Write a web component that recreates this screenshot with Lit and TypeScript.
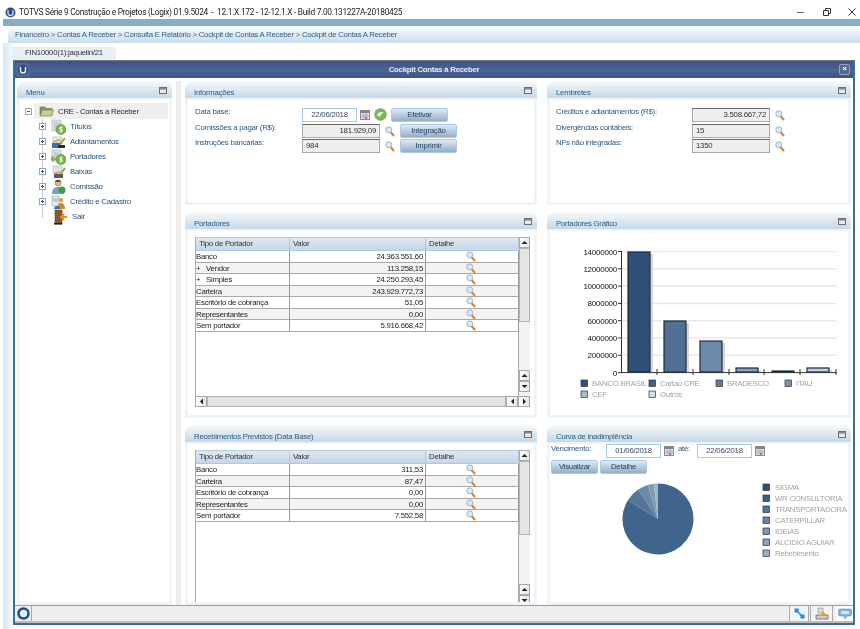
import { LitElement, html, css, svg } from "lit";
import { customElement } from "lit/decorators.js";

const mag = html`<svg class="mag" width="10" height="11" viewBox="0 0 10 11"><line x1="5.5" y1="6" x2="9" y2="10" stroke="#d9822b" stroke-width="2"/><circle cx="3.8" cy="3.8" r="3" fill="#dbe9f2" stroke="#9fb4c2" stroke-width="1"/></svg>`;
const cal = html`<svg class="cal" width="10" height="10" viewBox="0 0 10 10"><rect x="0.5" y="0.5" width="9" height="9" fill="#f4f4f4" stroke="#8a8a8a"/><rect x="1" y="1" width="8" height="2" fill="#7d8794"/><path d="M1 5h8M1 7h8M3 3v6M5 3v6M7 3v6" stroke="#9a9a9a" stroke-width=".7"/><rect x="5.2" y="7.2" width="1.6" height="1.6" fill="#d23b3b"/></svg>`;
const coin = svg`<circle cx="10" cy="10.500" r="5" fill="#7ab648" stroke="#4f8a2a" stroke-width=".6"/><path d="M11.6 8.800c-1-.9-3-.6-3 .6s3 .7 3 2-2.200 1.500-3.200.6M10 7.300v6.400" fill="none" stroke="#fff" stroke-width=".9"/>`;
const doc = svg`<rect x="1" y="1" width="9" height="11" fill="#d9dee5" stroke="#aab3bd" stroke-width=".6"/><path d="M3 4h5M3 6h5M3 8h4" stroke="#a0a9b3" stroke-width=".6"/>`;
const check = svg`<path d="M5 9l3 3 6-8" fill="none" stroke="#79b13a" stroke-width="2"/>`;
const hands = svg`<rect x="1" y="9" width="8" height="5" fill="#3f6fb0"/><rect x="7" y="11" width="7" height="3" fill="#2c2c2c"/><path d="M2 8l5-2 5 1" fill="none" stroke="#e0a979" stroke-width="2"/>`;
const icons: Record<string, unknown> = {
  titulos: svg`${doc}${coin}`,
  adiant: svg`<rect x="2" y="3" width="9" height="6" fill="#e8edf2" stroke="#aab3bd" stroke-width=".6"/>${check}${hands}`,
  portad: svg`${doc}<path d="M0 10h5M2.500 7.500L0 10l2.500 2.500" fill="none" stroke="#79b13a" stroke-width="1.500"/>${coin}`,
  baixas: svg`<rect x="2" y="2" width="9" height="7" fill="#dfe4ea" stroke="#aab3bd" stroke-width=".6"/>${check}<rect x="3" y="10" width="9" height="4" fill="#5a5a5a"/><path d="M3 9l6-1" stroke="#e0a979" stroke-width="2"/>`,
  comissao: svg`<circle cx="7" cy="4" r="3" fill="#e3b98b" stroke="#8a5f34" stroke-width=".5"/><path d="M4 3c1-3 5-3 6 0" fill="#6b4a26"/><path d="M1 15c0-6 3-7 6-7s6 1 6 7z" fill="#7e9fc4"/>${svg`<circle cx="11" cy="11" r="3.500" fill="#3f9c4a"/>`}`,
  credito: svg`<rect x="1" y="2" width="7" height="10" fill="#e6e9ee" stroke="#9aa3ad" stroke-width=".6"/><path d="M2 5h5M2 7h5" stroke="#79a04a" stroke-width=".7"/><circle cx="10" cy="6" r="2.200" fill="#d9a441"/><path d="M6 15c0-4 2-6 4-6s4 2 4 6z" fill="#c98a2b"/><path d="M3 15c0-2 1-3 3-3s3 1 3 3z" fill="#3f6fb0"/>`,
  sair: svg`<rect x="3" y="1" width="7" height="14" fill="#8a5a2b" stroke="#5a3a1a" stroke-width=".5"/><rect x="2" y="14" width="8" height="1.500" fill="#222"/><path d="M15 8H10M12 5L9 8l3 3" fill="none" stroke="#ef8a1d" stroke-width="2"/>`,
};
const treeIcon = (k: string) => html`<svg class="ticon" width="15" height="16" viewBox="0 0 15 16">${icons[k]}</svg>`;
const minIcon = html`<svg class="min" width="8" height="7" viewBox="0 0 8 7"><rect x=".5" y=".5" width="7" height="6" fill="#e9e9e9" stroke="#6f6f6f"/><rect x="1" y="1" width="6" height="1.600" fill="#8a8a8a"/></svg>`;

const barColors = ["#2f5178", "#4f6f95", "#6c88aa", "#8aa2c0", "#4a5a70", "#c3d0e4"];
const barTops = [253, 322, 342, 369, 372, 369];
const barX = [628, 664, 700, 736, 772, 807];
const yLabels = ["14000000", "12000000", "10000000", "8000000", "6000000", "4000000", "2000000", "0"];
const legend1 = [["BANCO BRASIL", "#2f5178", 581, 384], ["Cartao CRE", "#3d6189", 649, 384], ["BRADESCO", "#5d7ba0", 716, 384], ["ITAU", "#7a94b5", 785, 384], ["CEF", "#a8bbd4", 581, 395], ["Outros", "#d3dcea", 649, 395]] as const;
const legend2 = [["SIGMA", "#2f5178"], ["WR CONSULTORIA", "#3d5f86"], ["TRANSPORTADORA", "#54739a"], ["CATERPILLAR", "#6a84a6"], ["IDEIAS", "#7d96b8"], ["ALCIDIO AGUIAR", "#8aa0bd"], ["Rebebimento", "#9db0ca"]];

function pie(cx: number, cy: number, r: number) {
  const stops = [[0, 302, "#41648c"], [302, 326, "#557699"], [326, 343, "#6a88a9"], [343, 353, "#8099b7"], [353, 360, "#9fb3cb"]] as const;
  return stops.map(([a, b, c]) => {
    const p = (d: number) => { const t = (d * Math.PI) / 180; return `${(cx + r * Math.sin(t)).toFixed(2)} ${(cy - r * Math.cos(t)).toFixed(2)}`; };
    return svg`<path d="M${cx} ${cy}L${p(a)}A${r} ${r} 0 ${b - a > 180 ? 1 : 0} 1 ${p(b)}Z" fill="${c}"/>`;
  });
}

const t1 = [["Banco", "24.363.551,60"], ["+   Vendor", "113.258,15"], ["+   Simples", "24.250.293,45"], ["Carteira", "243.929.772,73"], ["Escritório de cobrança", "51,05"], ["Representantes", "0,00"], ["Sem portador", "5.916.668,42"]];
const t2 = [["Banco", "311,53"], ["Carteira", "87,47"], ["Escritório de cobrança", "0,00"], ["Representantes", "0,00"], ["Sem portador", "7.552,58"]];
const tree = [["titulos", "Títulos"], ["adiant", "Adiantamentos"], ["portad", "Portadores"], ["baixas", "Baixas"], ["comissao", "Comissão"], ["credito", "Crédito e Cadastro"]];

const up = html`<svg width="7" height="5" viewBox="0 0 7 5"><path d="M3.500 1L6.500 4H.5z" fill="#222"/></svg>`;
const down = html`<svg width="7" height="5" viewBox="0 0 7 5"><path d="M3.500 4L6.500 1H.5z" fill="#222"/></svg>`;
const left = html`<svg width="5" height="7" viewBox="0 0 5 7"><path d="M1 3.500L4 .5v6z" fill="#222"/></svg>`;
const right = html`<svg width="5" height="7" viewBox="0 0 5 7"><path d="M4 3.500L1 .5v6z" fill="#222"/></svg>`;

@customElement("app-root")
export class AppRoot extends LitElement {
  static styles = css`
    :host { display: block; width: 860px; height: 629px; overflow: hidden; background: #fff; font-family: "Liberation Sans", Arial, sans-serif; font-size: 7.800px; letter-spacing: -0.25px; color: #2a2a2a; filter: blur(0.3px); }
    .titlebar { height: 19px; display: flex; align-items: center; padding: 5px 0 0 5px; box-sizing: border-box; font: 8.300px Roboto, sans-serif; letter-spacing: -0.28px; color: #222; white-space: pre; gap: 3px; }
    .logo { flex: none; }
    .wctl { margin-left: auto; display: flex; gap: 17.500px; padding-right: 4px; align-items: center; }
    .shell { display: flex; flex-direction: column; margin-left: 3px; height: 610px; }
    .band { height: 7px; flex: none; background: #86aec4; }
    .crumb { height: 17px; flex: none; box-sizing: border-box; margin-left: 5px; border-radius: 7px 7px 0 0; background: linear-gradient(#fafcfe, #c9dceb); padding: 4px 0 0 7px; color: #2c5f8c; white-space: nowrap; line-height: 10px; }
    .stage { flex: 1; display: flex; min-height: 0; }
    .strip { width: 10px; flex: none; background: linear-gradient(90deg, #d9e7f2, #f4f8fb); }
    .content { flex: 1; display: flex; flex-direction: column; min-width: 0; padding-right: 5px; }
    .tabs { height: 17px; flex: none; display: flex; align-items: flex-end; }
    .tab { width: 104px; margin-left: -1px; height: 13px; box-sizing: border-box; background: #e6eff6; border-radius: 3px 3px 0 0; text-align: center; line-height: 12px; color: #333; }
    .window { height: 565px; box-sizing: border-box; flex: none; border: 2px solid #3c6e9c; border-top: 1px solid #777; display: flex; flex-direction: column; overflow: hidden; background: #fff; }
    .wintitle { height: 17px; flex: none; background: linear-gradient(#3d5288, #4d6394 55%, #3e5488); display: flex; align-items: center; color: #e6ecf5; font-weight: bold; font-size: 7.800px; padding: 0 3px 0 1px; position: relative; }
    .wintitle .t { position: absolute; left: 0; right: 0; text-align: center; }
    .wlogo { flex: none; position: relative; }
    .wclose { margin-left: auto; width: 11px; height: 11px; box-sizing: border-box; background: #54688f; border: 1px solid #8fa2c4; border-radius: 2px; color: #fff; font-size: 8px; line-height: 8px; text-align: center; position: relative; }
    .wbody { flex: 1; min-height: 0; display: flex; padding: 3px 2px 0 2px; }
    .col-menu { width: 155px; flex: none; }
    .splitter { width: 5px; flex: none; margin: 0 4px; background: #ededed; }
    .grid { flex: 1; display: grid; grid-template-columns: 352px 304px; grid-template-rows: 124px 206px 180px; column-gap: 10px; row-gap: 7px; }
    .panel { display: flex; flex-direction: column; background: #eef4f9; border-radius: 8px 8px 0 0; min-height: 0; height: 100%; overflow: hidden; }
    .phead { height: 17px; flex: none; box-sizing: border-box; background: linear-gradient(#f7fafc, #c5d8e7); display: flex; justify-content: space-between; padding: 7px 5px 0 9px; color: #2b5f88; line-height: 9px; }
    .phead .min { margin-top: -1px; }
    .pbody { flex: 1; min-height: 0; margin: 2px 3px 3px; background: #fff; position: relative; overflow: hidden; }
    .form { padding: 8px 0 0 7px; display: grid; row-gap: 1.500px; }
    .frow { display: flex; align-items: flex-start; height: 14px; }
    .frow .lab { color: #2f5a7c; line-height: 8px; }
    .info .lab { width: 107px; flex: none; }
    .rem .lab { width: 136px; flex: none; }
    .rem.form { padding-left: 6px; }
    .date { width: 55px; height: 14px; box-sizing: border-box; border: 1px solid #a9cbe8; background: #fff; text-align: center; line-height: 12px; color: #3c4d5e; flex: none; }
    .ro { height: 14px; box-sizing: border-box; background: #efefef; border: 1px solid #a8a8a8; border-top: 1.500px solid #666; text-align: right; padding-right: 3px; line-height: 11px; color: #333; flex: none; width: 78px; }
    .ro.l { text-align: left; padding-left: 3px; }
    .btn { height: 14px; width: 57px; box-sizing: border-box; border: 1px solid #a9cbe8; background: linear-gradient(#dfe9f2, #94aec6); border-radius: 2px; text-align: center; line-height: 12px; color: #1f4467; flex: none; }
    .frow .mag { margin: 2px 0 0 5px; flex: none; }
    .frow .cal { margin: 2px 0 0 3px; flex: none; }
    .frow .gr { margin: 0 0 0 4px; flex: none; }
    .frow .btn.e { margin-left: 4px; }
    .frow .btn.i { margin-left: 5px; }
    .tree { padding: 3px 0 0 5px; position: relative; }
    .root { display: flex; align-items: center; height: 16px; }
    .exp { width: 7px; height: 7px; box-sizing: border-box; border: 1px solid #9aa7b3; background: #fff; position: relative; flex: none; }
    .exp::before { content: ""; position: absolute; left: 1px; right: 1px; top: 2px; height: 1px; background: #2f5a8c; }
    .exp.plus::after { content: ""; position: absolute; top: 1px; bottom: 1px; left: 2px; width: 1px; background: #2f5a8c; }
    .rootsel { flex: 1; height: 16px; background: #efefef; display: flex; align-items: center; gap: 4px; padding-left: 5px; color: #2a2a2a; margin-right: 1px; margin-left: 2px; }
    .kids { padding-left: 14px; position: relative; }
    .kids::before { content: ""; position: absolute; left: 17px; top: 0; bottom: 6px; width: 1px; background: #ccc; }
    .kid { display: flex; align-items: center; height: 15px; color: #2b5378; position: relative; }
    .kid .ticon { margin: 0 4px 0 5px; flex: none; }
    .kid .nox { width: 7px; flex: none; }
    .kid.s .ticon { margin: 0 5px 0 6px; }
    .tblwrap { display: flex; flex-direction: column; margin: 6px 0 0 7px; width: 335px; border: 0; }
    .tmain { display: flex; }
    .tbl { width: 324px; box-sizing: border-box; border: 1px solid #aaa; border-top: 0; border-bottom: 0; background: #fff; }
    .tgrid { display: grid; grid-template-columns: 94px 136px 93px; grid-auto-rows: 11.500px; }
    .th { height: 14px; box-sizing: border-box; background: linear-gradient(#dfe8f1, #c7d6e6); border-top: 1px solid #bcd; border-bottom: 1px solid #a9cbe8; border-right: 1px solid #a9cbe8; padding-left: 3px; line-height: 12px; color: #333; }
    .thr { display: grid; grid-template-columns: 94px 136px 93px; }
    .td { border-right: 1px solid #999; border-bottom: 1px solid #aaa; box-sizing: border-box; padding: 0 2px 0 0; line-height: 11.500px; color: #222; white-space: pre; overflow: hidden; }
    .td.r { text-align: right; }
    .td.c { display: flex; justify-content: center; align-items: flex-start; }
    .td.z { background: #f3f3f3; }
    .vs { width: 11px; flex: none; display: flex; flex-direction: column; background: #f2f2f2; }
    .sb { height: 11px; width: 11px; flex: none; box-sizing: border-box; border: 1px solid #aaa; background: linear-gradient(90deg, #fff, #e6e6e6); display: flex; align-items: center; justify-content: center; }
    .thumb { background: #e4e4e4; border: 1px solid #b4b4b4; box-sizing: border-box; flex: none; display: flex; align-items: center; justify-content: center; }
    .dots { background-image: radial-gradient(#aaa 30%, transparent 35%); background-size: 2px 2px; }
    .vs .thumb { width: 11px; }
    .vs .dots { width: 7px; height: 12px; }
    .vs .sp { flex: 1; }
    .hs { display: flex; height: 11px; width: 335px; box-sizing: border-box; }
    .hs .thumb { flex: 1; height: 11px; }
    .hs .dots { width: 13px; height: 7px; }
    .hs .sb { width: 12px; }
    .c1 { display: flex; align-items: flex-start; height: 15px; padding: 0 0 0 1px; }
    .c1 .lab { color: #2f5a7c; width: 55px; flex: none; line-height: 10px; }
    .c1 .cal { margin: 2px 0 0 3px; flex: none; }
    .c1 .ate { margin: 0 0 0 4px; width: 19px; flex: none; color: #2f5a7c; line-height: 10px; }
    .c2 { display: flex; gap: 2px; padding-left: 1px; margin-top: 1px; }
    .c2 .btn { width: 47px; }
    .statusbar { height: 15px; flex: none; display: flex; background: #eee; align-items: stretch; border-top: 1px solid #9c9c9c; border-bottom: 2px solid #bbb; position: relative; }
    .st-logo { width: 16px; flex: none; display: flex; align-items: center; justify-content: center; border-right: 1px solid #aaa; }
    .st-in { flex: 1; }
    .st-b { width: 18px; flex: none; border: 1px solid #aaa; border-width: 0 1px; display: flex; align-items: center; justify-content: center; background: #f3f3f3; margin-left: 1px; }
    .st-b.w { width: 21px; }
    .st-c { width: 17px; flex: none; display: flex; align-items: center; justify-content: center; background: #fff; margin-left: 3px; }
    svg text { font-family: "Liberation Sans", Arial, sans-serif; letter-spacing: -0.25px; }
  `;

  private table(rows: string[][]) {
    return html`<div class="thr"><div class="th">Tipo de Portador</div><div class="th">Valor</div><div class="th">Detalhe</div></div>
      <div class="tgrid">${rows.map((r, i) => {
        const z = i % 2 ? "z" : "";
        return html`<div class="td ${z}">${r[0]}</div><div class="td r ${z}">${r[1]}</div><div class="td c ${z}">${mag}</div>`;
      })}</div>`;
  }

  private panel(title: string, body: unknown) {
    return html`<section class="panel"><div class="phead"><span>${title}</span>${minIcon}</div><div class="pbody">${body}</div></section>`;
  }

  private tableBox(rows: string[][], h: number, hs: boolean) {
    return html`<div class="tblwrap">
      <div class="tmain" style="height:${h}px">
        <div class="tbl">${this.table(rows)}</div>
        <div class="vs"><div class="sb">${up}</div><div class="thumb" style="height:74px"><div class="dots"></div></div><div class="sp"></div><div class="sb">${up}</div><div class="sb">${down}</div><div style="height:4px"></div></div>
      </div>
      ${hs ? html`<div class="hs"><div class="sb">${left}</div><div class="thumb"><div class="dots"></div></div><div class="sb">${left}</div><div class="sb">${right}</div></div>` : ""}
    </div>`;
  }

  render() {
    const tlogo = html`<svg class="logo" width="11" height="11" viewBox="0 0 11 11"><circle cx="5.500" cy="5.500" r="5" fill="#2d4f86"/><path d="M3 3v3a2.500 2.500 0 005 0V3" fill="none" stroke="#cfe0ef" stroke-width="1.300"/></svg>`;
    return html`
      <div class="titlebar">${tlogo}<span>TOTVS Série 9 Construção e Projetos (Logix) 01.9.5024  -  12.1.X.172 - 12-12.1.X - Build 7.00.131227A-20180425</span>
        <div class="wctl">
          <svg width="8" height="8" viewBox="0 0 8 8"><path d="M0 4.500h7" stroke="#666" stroke-width="1"/></svg>
          <svg width="8" height="8" viewBox="0 0 8 8"><path d="M.5 2.500h5v5h-5zM2.500 2.500V.5h5v5h-2" fill="none" stroke="#333"/></svg>
          <svg width="8" height="8" viewBox="0 0 8 8"><path d="M.5.5l7 7M7.500.5l-7 7" stroke="#333"/></svg>
        </div>
      </div>
      <div class="shell">
        <div class="band"></div>
        <div class="crumb">Financeiro &gt; Contas A Receber &gt; Consulta E Relatório &gt; Cockpit de Contas A Receber &gt; Cockpit de Contas A Receber</div>
        <div class="stage">
          <div class="strip"></div>
          <div class="content">
            <div class="tabs"><div class="tab">FIN10000(1):jaquelin/21</div></div>
            <div class="window">
              <div class="wintitle">
                <span class="t">Cockpit Contas à Receber</span>
                <svg class="wlogo" width="14" height="14" viewBox="0 0 14 14"><rect width="14" height="14" rx="2" fill="#54688f"/><circle cx="7" cy="7" r="5" fill="#1f4b8a"/><path d="M4.500 4v3.500a2.500 2.500 0 005 0V4" fill="none" stroke="#e6f0fa" stroke-width="1.500"/></svg>
                <div class="wclose">×</div>
              </div>
              <div class="wbody">
                <div class="col-menu">
                  ${this.panel("Menu", html`<div class="tree">
                    <div class="root"><div class="exp"></div><div class="rootsel">
                      <svg width="15" height="12" viewBox="0 0 15 12"><path d="M1 2h5l1 1.500h6V10H1z" fill="#8c9a5a" stroke="#5f6b3a" stroke-width=".6"/><path d="M1 11l2-6h11.500l-2 6z" fill="#c5cd9a" stroke="#6b7642" stroke-width=".6"/></svg>
                      <span>CRE - Contas a Receber</span></div></div>
                    <div class="kids">
                      ${tree.map(([k, t]) => html`<div class="kid"><div class="exp plus"></div>${treeIcon(k)}<span>${t}</span></div>`)}
                      <div class="kid s"><div class="nox"></div>${treeIcon("sair")}<span>Sair</span></div>
                    </div>
                  </div>`)}
                </div>
                <div class="splitter"></div>
                <div class="grid">
                  ${this.panel("Informações", html`<div class="form info">
                    <div class="frow"><span class="lab">Data base:</span><div class="date">22/06/2018</div>${cal}
                      <svg class="gr" width="13" height="13" viewBox="0 0 13 13"><circle cx="6.500" cy="6.500" r="6" fill="#79b84a" stroke="#9a9a9a" stroke-width=".6"/><path d="M3 7c1-3 5-4 7-2-2 0-3 1-3 3-2 1-3 0-4-1z" fill="#e8f5d8"/></svg>
                      <div class="btn e">Efetivar</div></div>
                    <div class="frow"><span class="lab">Comissões a pagar (R$):</span><div class="ro">181.929,09</div>${mag}<div class="btn i">Integração</div></div>
                    <div class="frow"><span class="lab">Instruções bancárias:</span><div class="ro l">984</div>${mag}<div class="btn i">Imprimir</div></div>
                  </div>`)}
                  ${this.panel("Lembretes", html`<div class="form rem">
                    <div class="frow"><span class="lab">Créditos e adiantamentos (R$):</span><div class="ro">3.508.667,72</div>${mag}</div>
                    <div class="frow"><span class="lab">Divergências contábeis:</span><div class="ro l">15</div>${mag}</div>
                    <div class="frow"><span class="lab">NFs não integradas:</span><div class="ro l">1350</div>${mag}</div>
                  </div>`)}
                  ${this.panel("Portadores", this.tableBox(t1, 159, true))}
                  ${this.panel("Portadores Gráfico", html`<svg width="298" height="184" viewBox="550 232 298 184" style="display:block">
                    ${yLabels.map((l, i) => { const y = 252.500 + i * 17.300; return svg`<line x1="621" y1="${y}" x2="837" y2="${y}" stroke="${i === 7 ? "#333" : "#e9e9e9"}" stroke-width="${i === 7 ? 1 : 1.500}"/><line x1="618" y1="${y}" x2="622" y2="${y}" stroke="#333"/><text x="617" y="${y + 3}" text-anchor="end" font-size="8" fill="#111">${l}</text>`; })}
                    <line x1="621.500" y1="252" x2="621.500" y2="373" stroke="#333"/>
                    ${[657, 693, 729, 764, 800, 836].map((x) => svg`<line x1="${x}" y1="370" x2="${x}" y2="376" stroke="#333"/>`)}
                    ${barX.map((x, i) => svg`<rect x="${x + 2}" y="${barTops[i] + 2}" width="23" height="${Math.max(373 - barTops[i] - 2, 0)}" fill="#d6d6d6"/><rect x="${x}" y="${barTops[i]}" width="22" height="${373 - barTops[i]}" fill="${barColors[i]}" stroke="#1e2a38" stroke-width="1.200"/>`)}
                    ${legend1.map(([t, c, x, y]) => svg`<rect x="${x}" y="${y - 3}" width="6.500" height="6.500" fill="${c}" stroke="#333" stroke-width=".7"/><text x="${x + 11}" y="${y + 3}" font-size="7.800" fill="#a3a3a3">${t}</text>`)}
                  </svg>`)}
                  ${this.panel("Recebimentos Previstos (Data Base)", this.tableBox(t2, 160, false))}
                  ${this.panel("Curva de inadimplência", html`<div>
                    <div class="c1"><span class="lab">Vencimento:</span><div class="date">01/06/2018</div>${cal}<span class="ate">até:</span><div class="date">22/06/2018</div>${cal}</div>
                    <div class="c2"><div class="btn">Visualizar</div><div class="btn">Detalhe</div></div>
                    <svg width="298" height="130" viewBox="550 475 298 130" style="display:block">
                      ${pie(658, 520, 35.500)}
                      ${legend2.map(([t, c], i) => { const y = 488 + i * 11; return svg`<rect x="763" y="${y - 3}" width="6.500" height="6.500" fill="${c}" stroke="#333" stroke-width=".7"/><text x="775" y="${y + 3}" font-size="7.800" fill="#a3a3a3">${t}</text>`; })}
                    </svg>
                  </div>`)}
                </div>
              </div>
              <div class="statusbar">
                <div class="st-logo"><svg width="13" height="13" viewBox="0 0 13 13"><circle cx="6.500" cy="6.500" r="5" fill="#dff0fa" stroke="#1f4f86" stroke-width="2.500"/></svg></div>
                <div class="st-in"></div>
                <div class="st-b"><svg width="11" height="11" viewBox="0 0 11 11"><path d="M2 2l7 7" stroke="#2f86d0" stroke-width="1.500"/><rect x="0.500" y="0.500" width="4" height="4" fill="#2f86d0"/><rect x="6.500" y="6.500" width="4" height="4" fill="#2f86d0"/></svg></div>
                <div class="st-b w"><svg width="16" height="14" viewBox="0 0 16 14"><path d="M4 1l5 0 0 5-5 0z" fill="#d8dde2" stroke="#8a8a8a" stroke-width=".6"/><path d="M2 8h12v4H2z" fill="#cfcfcf" stroke="#555" stroke-width=".7"/><path d="M8 4l5 4H8z" fill="#ef9a1d"/></svg></div>
                <div class="st-c"><svg width="14" height="12" viewBox="0 0 14 12"><path d="M2 1h10a1.500 1.500 0 011.500 1.500v4A1.500 1.500 0 0112 8H9l-2 3-1-3H2A1.500 1.500 0 01.5 6.500v-4A1.500 1.500 0 012 1z" fill="#7fb2dc" stroke="#5b93c5" stroke-width=".6"/><rect x="3" y="3" width="8" height="3" fill="#dbe3ea"/></svg></div>
              </div>
            </div>
          </div>
        </div>
      </div>
    `;
  }
}
